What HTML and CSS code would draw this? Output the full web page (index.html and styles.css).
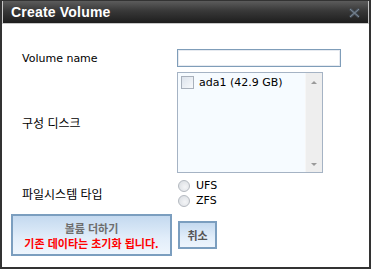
FILE: index.html
```html
<!DOCTYPE html>
<html lang="ko">

<head>
    <meta charset="UTF-8">
    <title>Create Volume</title>
    <link rel="stylesheet" href="styles.css">
</head>

<body>
    <div class="dialog">
        <div class="titlebar">
            <span class="title">Create Volume</span>
            <span class="close">
                <svg width="11" height="10" viewBox="0 0 11 10">
                    <path d="M1 1 L10 9 M10 1 L1 9" stroke="#4a5561" stroke-width="2.6" fill="none"/>
                    <path d="M1 1 L10 9 M10 1 L1 9" stroke="#7f8b98" stroke-width="1" fill="none"/>
                </svg>
            </span>
        </div>

        <div class="content">
            <div class="row">
                <label class="label" for="volName">Volume name</label>
                <input class="text-input" type="text" id="volName">
            </div>

            <div class="row row-disk">
                <span class="label kr">구성 디스크</span>
                <div class="listbox">
                    <div class="list-items">
                        <div class="list-item">
                            <span class="checkbox"></span>
                            <span>ada1 (42.9 GB)</span>
                        </div>
                    </div>
                    <div class="scrollbar">
                        <span class="arrow-up"></span>
                        <span class="arrow-down"></span>
                    </div>
                </div>
            </div>

            <div class="row row-fs">
                <span class="label kr">파일시스템 타입</span>
                <div class="radios">
                    <div class="radio-item"><span class="radio"></span>UFS</div>
                    <div class="radio-item"><span class="radio"></span>ZFS</div>
                </div>
            </div>

            <div class="buttons">
                <button class="btn btn-add" type="button">
                    <span class="btn-main">볼륨 더하기</span>
                    <span class="btn-warn">기존 데이타는 초기화 됩니다.</span>
                </button>
                <button class="btn btn-cancel" type="button">취소</button>
            </div>
        </div>
    </div>
</body>

</html>
```

FILE: styles.css
```css
html, body {
    margin: 0;
    padding: 0;
}

body {
    font-family: "DejaVu Sans", "Noto Sans CJK KR", sans-serif;
    font-size: 11px;
    color: #000;
    background-color: #fff;
}

.dialog {
    width: 371px;
    height: 269px;
    box-sizing: border-box;
    border: 2px solid #333;
    border-top-width: 1px;
    background-color: #fff;
}

.titlebar {
    height: 22px;
    display: flex;
    align-items: center;
    justify-content: space-between;
    padding: 0 8px 0 8px;
    border: 1px solid #c8c8c8;
    border-top: none;
    background: linear-gradient(#5c5c5c, #383838 45%, #1e1e1e);
}

.title {
    color: #fff;
    font-family: "Liberation Sans", Arial, sans-serif;
    font-weight: bold;
    font-size: 14px;
    letter-spacing: 0.2px;
}

.close {
    display: flex;
    margin-top: 1px;
}

.content {
    padding: 25px 0 0 9px;
}

.row {
    display: flex;
    align-items: center;
}

.label {
    width: 166px;
    padding-left: 11px;
    box-sizing: border-box;
    color: #000;
}

.kr {
    font-family: "Noto Sans CJK KR", sans-serif;
    font-size: 12px;
}

.text-input {
    width: 164px;
    height: 18px;
    box-sizing: border-box;
    margin: 0;
    padding: 0 2px;
    border: 1px solid #7f9db9;
    box-shadow: inset 0 0 0 1px #e6eaf0;
    font-family: inherit;
    font-size: 11px;
}

.row-disk {
    margin-top: 5px;
}

.listbox {
    width: 146px;
    height: 101px;
    box-sizing: border-box;
    border: 1px solid #a5b3c4;
    background-color: #f6fbff;
    display: flex;
}

.list-items {
    flex: 1;
    padding: 3px 3px;
}

.list-item {
    display: flex;
    align-items: center;
    gap: 5px;
    font-size: 11px;
}

.checkbox {
    width: 13px;
    height: 13px;
    box-sizing: border-box;
    border: 1px solid #a8b0bb;
    background: linear-gradient(135deg, #dce3ec, #f7f9fb);
}

.scrollbar {
    width: 16px;
    background-color: #eeeeee;
    border-left: 1px solid #f6f6f6;
    display: flex;
    flex-direction: column;
    justify-content: space-between;
    align-items: center;
    padding: 8px 0 6px;
}

.arrow-up,
.arrow-down {
    width: 0;
    height: 0;
    border-left: 3px solid transparent;
    border-right: 3px solid transparent;
}

.arrow-up {
    border-bottom: 3px solid #9a9a9a;
}

.arrow-down {
    border-top: 3px solid #9a9a9a;
}

.row-fs {
    margin-top: 6px;
}

.radios {
    display: flex;
    flex-direction: column;
    gap: 2px;
    margin-left: 1px;
}

.radio-item {
    display: flex;
    align-items: center;
    gap: 6px;
    height: 13px;
    font-size: 11px;
}

.radio {
    width: 12px;
    height: 12px;
    box-sizing: border-box;
    border-radius: 50%;
    border: 1px solid #b4b9c0;
    background: radial-gradient(circle at 60% 60%, #f4f5f7, #d7dbe0);
}

.buttons {
    display: flex;
    align-items: center;
    gap: 6px;
    margin-top: 7px;
}

.btn {
    box-sizing: border-box;
    border: 2px solid #7b9ebf;
    background: linear-gradient(#c4d9ef, #e2eefa 60%, #eef5fd);
    font-family: "Noto Sans CJK KR", sans-serif;
    font-weight: bold;
    cursor: pointer;
    padding: 0;
}

.btn-add {
    width: 161px;
    height: 42px;
    display: flex;
    flex-direction: column;
    align-items: center;
    justify-content: center;
    gap: 1px;
}

.btn-main {
    color: #6d6d6d;
    font-size: 11px;
    line-height: 14px;
}

.btn-warn {
    color: #ff0000;
    font-size: 11px;
    line-height: 14px;
}

.btn-cancel {
    width: 39px;
    height: 28px;
    color: #555;
    font-size: 11px;
}
```
